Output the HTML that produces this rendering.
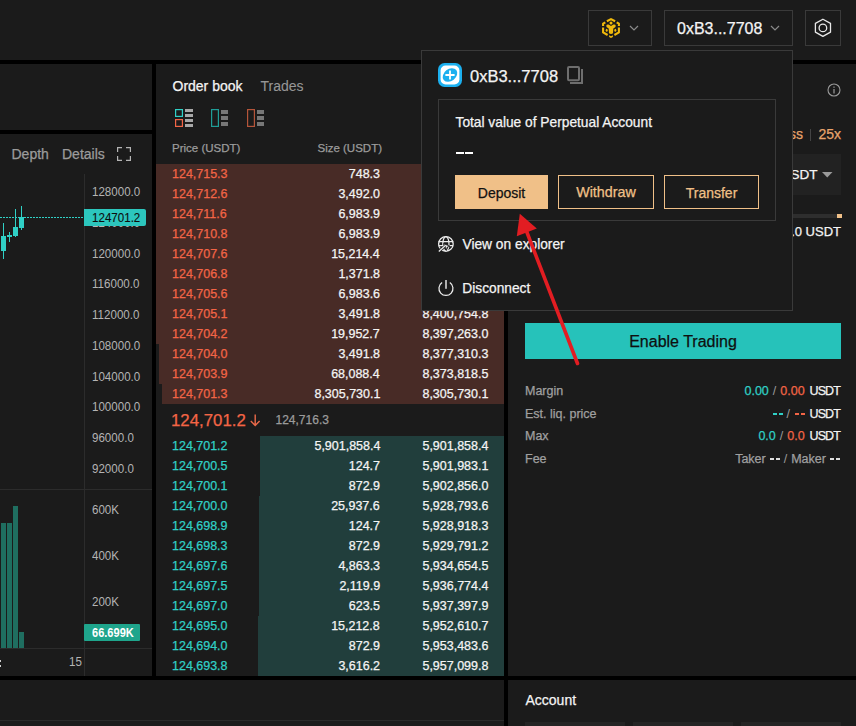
<!DOCTYPE html>
<html><head><meta charset="utf-8"><style>
html,body{margin:0;padding:0;}
body{width:856px;height:726px;position:relative;overflow:hidden;background:#000;font-family:"Liberation Sans", sans-serif;}
</style></head><body>
<div style="position:absolute;left:0px;top:0px;width:856px;height:60px;background:#1b1b1b"></div>
<div style="position:absolute;left:0px;top:64px;width:152px;height:66px;background:#1b1b1b"></div>
<div style="position:absolute;left:0px;top:134px;width:152px;height:542px;background:#1b1b1b"></div>
<div style="position:absolute;left:156px;top:64px;width:348px;height:612px;background:#1b1b1b"></div>
<div style="position:absolute;left:508px;top:64px;width:348px;height:612px;background:#1b1b1b"></div>
<div style="position:absolute;left:0px;top:680px;width:504px;height:46px;background:#1b1b1b"></div>
<div style="position:absolute;left:508px;top:680px;width:348px;height:46px;background:#1b1b1b"></div>
<div style="position:absolute;left:588px;top:10px;width:64px;height:36px;border:1px solid #3a3a3a;box-sizing:border-box"></div>
<div style="position:absolute;left:664px;top:10px;width:129px;height:36px;border:1px solid #3a3a3a;box-sizing:border-box"></div>
<div style="position:absolute;left:805px;top:10px;width:36px;height:36px;border:1px solid #3a3a3a;box-sizing:border-box"></div>
<svg style="position:absolute;left:602px;top:18px;" width="18" height="20" viewBox="0 0 18 20"><g fill="none" stroke="#f0b90b" stroke-width="2.1" stroke-linejoin="round"><path d="M4.9 3.3 L9 1.1 L13.1 3.3"/><path d="M3.3 4.3 L1.1 5.6 L1.1 7.9"/><path d="M14.7 4.3 L16.9 5.6 L16.9 7.9"/><path d="M1.1 9.6 L1.1 14.4 L5.6 17"/><path d="M16.9 9.6 L16.9 14.4 L12.4 17"/></g><g fill="#f0b90b"><path d="M7.1 17.2 L9 18.2 L10.9 17.2 L10.9 18.9 L9 20 L7.1 18.9 Z"/><circle cx="9" cy="4.9" r="1.5"/><path d="M4.2 7.9 Q4.6 5.9 6.6 6.6 L9 7.9 L11.4 6.6 Q13.4 5.9 13.8 7.9 Q13.8 9.3 11.3 10.6 L11 15.2 Q9 16.6 7 15.2 L6.7 10.6 Q4.2 9.3 4.2 7.9 Z"/><ellipse cx="4.7" cy="12.2" rx="1" ry="1.5"/><ellipse cx="13.3" cy="12.2" rx="1" ry="1.5"/></g></svg>
<svg style="position:absolute;left:629px;top:25px;" width="10" height="6" viewBox="0 0 10 6"><path d="M1 1 L5 5 L9 1" fill="none" stroke="#8a8a8a" stroke-width="1.2"/></svg>
<svg style="position:absolute;left:770px;top:25px;" width="10" height="6" viewBox="0 0 10 6"><path d="M1 1 L5 5 L9 1" fill="none" stroke="#8a8a8a" stroke-width="1.2"/></svg>
<div style="position:absolute;left:677px;top:20.76px;font-size:16px;line-height:16px;color:#f4f4f4;font-weight:400;white-space:nowrap;-webkit-text-stroke:0.25px #f4f4f4;">0xB3...7708</div>
<svg style="position:absolute;left:813px;top:18px;" width="20" height="20" viewBox="0 0 20 20"><path d="M9.9 1.2 L17.5 5.35 L17.5 14.15 L9.9 18.4 L2.4 14.15 L2.4 5.35 Z" fill="none" stroke="#e8e8e8" stroke-width="1.3" stroke-linejoin="round"/><circle cx="9.9" cy="9.9" r="3.8" fill="none" stroke="#e8e8e8" stroke-width="1.3"/></svg>
<div style="position:absolute;left:11.5px;top:147.15px;font-size:14px;line-height:14px;color:#9b9b9b;font-weight:400;white-space:nowrap;-webkit-text-stroke:0.25px #9b9b9b;">Depth</div>
<div style="position:absolute;left:62px;top:147.15px;font-size:14px;line-height:14px;color:#9b9b9b;font-weight:400;white-space:nowrap;-webkit-text-stroke:0.25px #9b9b9b;">Details</div>
<svg style="position:absolute;left:116px;top:146px;" width="16" height="16" viewBox="0 0 16 16"><path d="M1.6 6 V1.6 H6 M10 1.6 H14.4 V6 M14.4 10 V14.4 H10 M6 14.4 H1.6 V10" fill="none" stroke="#b4b4b4" stroke-width="1.2"/></svg>
<div style="position:absolute;left:84px;top:174px;width:1px;height:502px;background:#2c2c2c"></div>
<div style="position:absolute;left:0px;top:489px;width:152px;height:1px;background:#2c2c2c"></div>
<div style="position:absolute;left:0px;top:648px;width:152px;height:1px;background:#2c2c2c"></div>
<div style="position:absolute;left:92px;top:185.00px;font-size:13px;line-height:13px;color:#b4b4b4;font-weight:400;white-space:nowrap;transform:scaleX(0.89);transform-origin:left center;">128000.0</div>
<div style="position:absolute;left:92px;top:215.78px;font-size:13px;line-height:13px;color:#b4b4b4;font-weight:400;white-space:nowrap;transform:scaleX(0.89);transform-origin:left center;">124000.0</div>
<div style="position:absolute;left:92px;top:246.56px;font-size:13px;line-height:13px;color:#b4b4b4;font-weight:400;white-space:nowrap;transform:scaleX(0.89);transform-origin:left center;">120000.0</div>
<div style="position:absolute;left:92px;top:277.34px;font-size:13px;line-height:13px;color:#b4b4b4;font-weight:400;white-space:nowrap;transform:scaleX(0.89);transform-origin:left center;">116000.0</div>
<div style="position:absolute;left:92px;top:308.12px;font-size:13px;line-height:13px;color:#b4b4b4;font-weight:400;white-space:nowrap;transform:scaleX(0.89);transform-origin:left center;">112000.0</div>
<div style="position:absolute;left:92px;top:338.90px;font-size:13px;line-height:13px;color:#b4b4b4;font-weight:400;white-space:nowrap;transform:scaleX(0.89);transform-origin:left center;">108000.0</div>
<div style="position:absolute;left:92px;top:369.68px;font-size:13px;line-height:13px;color:#b4b4b4;font-weight:400;white-space:nowrap;transform:scaleX(0.89);transform-origin:left center;">104000.0</div>
<div style="position:absolute;left:92px;top:400.46px;font-size:13px;line-height:13px;color:#b4b4b4;font-weight:400;white-space:nowrap;transform:scaleX(0.89);transform-origin:left center;">100000.0</div>
<div style="position:absolute;left:92px;top:431.24px;font-size:13px;line-height:13px;color:#b4b4b4;font-weight:400;white-space:nowrap;transform:scaleX(0.89);transform-origin:left center;">96000.0</div>
<div style="position:absolute;left:92px;top:462.02px;font-size:13px;line-height:13px;color:#b4b4b4;font-weight:400;white-space:nowrap;transform:scaleX(0.89);transform-origin:left center;">92000.0</div>
<div style="position:absolute;left:92px;top:503.40px;font-size:13px;line-height:13px;color:#b4b4b4;font-weight:400;white-space:nowrap;transform:scaleX(0.89);transform-origin:left center;">600K</div>
<div style="position:absolute;left:92px;top:549.20px;font-size:13px;line-height:13px;color:#b4b4b4;font-weight:400;white-space:nowrap;transform:scaleX(0.89);transform-origin:left center;">400K</div>
<div style="position:absolute;left:92px;top:595.00px;font-size:13px;line-height:13px;color:#b4b4b4;font-weight:400;white-space:nowrap;transform:scaleX(0.89);transform-origin:left center;">200K</div>
<div style="position:absolute;left:69px;top:655.00px;font-size:13px;line-height:13px;color:#b4b4b4;font-weight:400;white-space:nowrap;transform:scaleX(0.89);transform-origin:left center;">15</div>
<div style="position:absolute;left:0px;top:660px;width:1px;height:1.5px;background:#cfcfcf"></div>
<div style="position:absolute;left:0px;top:665px;width:1px;height:1.5px;background:#cfcfcf"></div>
<div style="position:absolute;left:0px;top:217px;width:84px;height:1px;background:repeating-linear-gradient(90deg,#30d0c6 0 1.5px,transparent 1.5px 3px)"></div>
<div style="position:absolute;left:84px;top:209px;width:62px;height:17px;background:#2cc6bd;border-radius:0 2px 2px 0"></div>
<div style="position:absolute;left:92.3px;top:212.17px;font-size:12.2px;line-height:12.2px;color:#0d0d0d;font-weight:400;white-space:nowrap;transform:scaleX(0.95);transform-origin:left center;-webkit-text-stroke:0.1px #0d0d0d;">124701.2</div>
<div style="position:absolute;left:3px;top:223px;width:1.2px;height:36px;background:#30d0c6"></div>
<div style="position:absolute;left:1px;top:236px;width:5px;height:15px;background:#30d0c6"></div>
<div style="position:absolute;left:9px;top:232px;width:1.2px;height:10px;background:#30d0c6"></div>
<div style="position:absolute;left:7px;top:235px;width:5px;height:2px;background:#30d0c6"></div>
<div style="position:absolute;left:15px;top:209px;width:1.2px;height:28px;background:#30d0c6"></div>
<div style="position:absolute;left:13px;top:227px;width:5px;height:9px;background:#30d0c6"></div>
<div style="position:absolute;left:21px;top:206px;width:1.2px;height:24px;background:#30d0c6"></div>
<div style="position:absolute;left:19px;top:217px;width:5px;height:11px;background:#30d0c6"></div>
<div style="position:absolute;left:1px;top:523px;width:5px;height:125px;background:#1f6e60"></div>
<div style="position:absolute;left:7px;top:523px;width:5px;height:125px;background:#1f6e60"></div>
<div style="position:absolute;left:13px;top:506px;width:5px;height:142px;background:#1f6e60"></div>
<div style="position:absolute;left:19px;top:632px;width:5px;height:16px;background:#1f6e60"></div>
<div style="position:absolute;left:84px;top:624px;width:56px;height:17px;background:#1fa58c;border-radius:1px"></div>
<div style="position:absolute;left:91.5px;top:627.04px;font-size:12px;line-height:12px;color:#ffffff;font-weight:700;white-space:nowrap;transform:scaleX(0.92);transform-origin:left center;">66.699K</div>
<div style="position:absolute;left:172.5px;top:79.35px;font-size:14px;line-height:14px;color:#f4f4f4;font-weight:400;white-space:nowrap;-webkit-text-stroke:0.25px #f4f4f4;">Order book</div>
<div style="position:absolute;left:260.5px;top:79.35px;font-size:14px;line-height:14px;color:#969696;font-weight:400;white-space:nowrap;-webkit-text-stroke:0.1px #969696;">Trades</div>
<svg style="position:absolute;left:174px;top:108px;" width="20" height="20" viewBox="0 0 20 20"><rect x="1.6" y="1.6" width="6.8" height="6.8" fill="none" stroke="#2fd0c6" stroke-width="1.2"/><rect x="1.6" y="11.6" width="6.8" height="6.8" fill="none" stroke="#f36546" stroke-width="1.2"/><g fill="#a8a8a8"><rect x="11" y="1" width="8" height="3"/><rect x="11" y="6" width="8" height="3"/><rect x="11" y="11" width="8" height="3"/><rect x="11" y="16" width="8" height="3"/></g></svg>
<svg style="position:absolute;left:210px;top:108px;" width="20" height="20" viewBox="0 0 20 20"><rect x="1.6" y="1.6" width="6.8" height="16.8" fill="none" stroke="#1f9e98" stroke-width="1.2"/><g fill="#777"><rect x="11" y="2" width="7" height="4"/><rect x="11" y="8" width="7" height="4"/><rect x="11" y="14" width="7" height="4"/></g></svg>
<svg style="position:absolute;left:246px;top:108px;" width="20" height="20" viewBox="0 0 20 20"><rect x="1.6" y="1.6" width="6.8" height="16.8" fill="none" stroke="#b5553a" stroke-width="1.2"/><g fill="#777"><rect x="11" y="2" width="7" height="4"/><rect x="11" y="8" width="7" height="4"/><rect x="11" y="14" width="7" height="4"/></g></svg>
<div style="position:absolute;left:172px;top:142.77px;font-size:11.5px;line-height:11.5px;color:#9b9b9b;font-weight:400;white-space:nowrap;-webkit-text-stroke:0.25px #9b9b9b;">Price (USDT)</div>
<div style="position:absolute;right:474px;text-align:right;top:142.77px;font-size:11.5px;line-height:11.5px;color:#9b9b9b;font-weight:400;white-space:nowrap;-webkit-text-stroke:0.25px #9b9b9b;">Size (USDT)</div>
<div style="position:absolute;left:156px;top:164px;width:348px;height:20px;background:#482b26"></div>
<div style="position:absolute;left:156px;top:184px;width:348px;height:20px;background:#482b26"></div>
<div style="position:absolute;left:156px;top:204px;width:348px;height:20px;background:#482b26"></div>
<div style="position:absolute;left:156px;top:224px;width:348px;height:20px;background:#482b26"></div>
<div style="position:absolute;left:156px;top:244px;width:348px;height:20px;background:#482b26"></div>
<div style="position:absolute;left:156px;top:264px;width:348px;height:20px;background:#482b26"></div>
<div style="position:absolute;left:156px;top:284px;width:348px;height:20px;background:#482b26"></div>
<div style="position:absolute;left:156px;top:304px;width:348px;height:20px;background:#482b26"></div>
<div style="position:absolute;left:156px;top:324px;width:348px;height:20px;background:#482b26"></div>
<div style="position:absolute;left:159px;top:344px;width:345px;height:20px;background:#482b26"></div>
<div style="position:absolute;left:159px;top:364px;width:345px;height:20px;background:#482b26"></div>
<div style="position:absolute;left:162px;top:384px;width:342px;height:20px;background:#482b26"></div>
<div style="position:absolute;left:172.3px;top:168.04px;font-size:12px;line-height:12px;color:#f36546;font-weight:400;white-space:nowrap;transform:scaleX(1.04);transform-origin:left center;-webkit-text-stroke:0.25px #f36546;">124,715.3</div>
<div style="position:absolute;right:475.8px;text-align:right;top:168.04px;font-size:12px;line-height:12px;color:#f4f4f4;font-weight:400;white-space:nowrap;transform:scaleX(1.04);transform-origin:right center;-webkit-text-stroke:0.25px #f4f4f4;">748.3</div>
<div style="position:absolute;right:367.8px;text-align:right;top:168.04px;font-size:12px;line-height:12px;color:#f4f4f4;font-weight:400;white-space:nowrap;transform:scaleX(1.04);transform-origin:right center;-webkit-text-stroke:0.25px #f4f4f4;">8,456,321.5</div>
<div style="position:absolute;left:172.3px;top:188.04px;font-size:12px;line-height:12px;color:#f36546;font-weight:400;white-space:nowrap;transform:scaleX(1.04);transform-origin:left center;-webkit-text-stroke:0.25px #f36546;">124,712.6</div>
<div style="position:absolute;right:475.8px;text-align:right;top:188.04px;font-size:12px;line-height:12px;color:#f4f4f4;font-weight:400;white-space:nowrap;transform:scaleX(1.04);transform-origin:right center;-webkit-text-stroke:0.25px #f4f4f4;">3,492.0</div>
<div style="position:absolute;right:367.8px;text-align:right;top:188.04px;font-size:12px;line-height:12px;color:#f4f4f4;font-weight:400;white-space:nowrap;transform:scaleX(1.04);transform-origin:right center;-webkit-text-stroke:0.25px #f4f4f4;">8,455,573.2</div>
<div style="position:absolute;left:172.3px;top:208.04px;font-size:12px;line-height:12px;color:#f36546;font-weight:400;white-space:nowrap;transform:scaleX(1.04);transform-origin:left center;-webkit-text-stroke:0.25px #f36546;">124,711.6</div>
<div style="position:absolute;right:475.8px;text-align:right;top:208.04px;font-size:12px;line-height:12px;color:#f4f4f4;font-weight:400;white-space:nowrap;transform:scaleX(1.04);transform-origin:right center;-webkit-text-stroke:0.25px #f4f4f4;">6,983.9</div>
<div style="position:absolute;right:367.8px;text-align:right;top:208.04px;font-size:12px;line-height:12px;color:#f4f4f4;font-weight:400;white-space:nowrap;transform:scaleX(1.04);transform-origin:right center;-webkit-text-stroke:0.25px #f4f4f4;">8,452,081.2</div>
<div style="position:absolute;left:172.3px;top:228.04px;font-size:12px;line-height:12px;color:#f36546;font-weight:400;white-space:nowrap;transform:scaleX(1.04);transform-origin:left center;-webkit-text-stroke:0.25px #f36546;">124,710.8</div>
<div style="position:absolute;right:475.8px;text-align:right;top:228.04px;font-size:12px;line-height:12px;color:#f4f4f4;font-weight:400;white-space:nowrap;transform:scaleX(1.04);transform-origin:right center;-webkit-text-stroke:0.25px #f4f4f4;">6,983.9</div>
<div style="position:absolute;right:367.8px;text-align:right;top:228.04px;font-size:12px;line-height:12px;color:#f4f4f4;font-weight:400;white-space:nowrap;transform:scaleX(1.04);transform-origin:right center;-webkit-text-stroke:0.25px #f4f4f4;">8,445,097.3</div>
<div style="position:absolute;left:172.3px;top:248.04px;font-size:12px;line-height:12px;color:#f36546;font-weight:400;white-space:nowrap;transform:scaleX(1.04);transform-origin:left center;-webkit-text-stroke:0.25px #f36546;">124,707.6</div>
<div style="position:absolute;right:475.8px;text-align:right;top:248.04px;font-size:12px;line-height:12px;color:#f4f4f4;font-weight:400;white-space:nowrap;transform:scaleX(1.04);transform-origin:right center;-webkit-text-stroke:0.25px #f4f4f4;">15,214.4</div>
<div style="position:absolute;right:367.8px;text-align:right;top:248.04px;font-size:12px;line-height:12px;color:#f4f4f4;font-weight:400;white-space:nowrap;transform:scaleX(1.04);transform-origin:right center;-webkit-text-stroke:0.25px #f4f4f4;">8,438,113.4</div>
<div style="position:absolute;left:172.3px;top:268.04px;font-size:12px;line-height:12px;color:#f36546;font-weight:400;white-space:nowrap;transform:scaleX(1.04);transform-origin:left center;-webkit-text-stroke:0.25px #f36546;">124,706.8</div>
<div style="position:absolute;right:475.8px;text-align:right;top:268.04px;font-size:12px;line-height:12px;color:#f4f4f4;font-weight:400;white-space:nowrap;transform:scaleX(1.04);transform-origin:right center;-webkit-text-stroke:0.25px #f4f4f4;">1,371.8</div>
<div style="position:absolute;right:367.8px;text-align:right;top:268.04px;font-size:12px;line-height:12px;color:#f4f4f4;font-weight:400;white-space:nowrap;transform:scaleX(1.04);transform-origin:right center;-webkit-text-stroke:0.25px #f4f4f4;">8,422,899.0</div>
<div style="position:absolute;left:172.3px;top:288.04px;font-size:12px;line-height:12px;color:#f36546;font-weight:400;white-space:nowrap;transform:scaleX(1.04);transform-origin:left center;-webkit-text-stroke:0.25px #f36546;">124,705.6</div>
<div style="position:absolute;right:475.8px;text-align:right;top:288.04px;font-size:12px;line-height:12px;color:#f4f4f4;font-weight:400;white-space:nowrap;transform:scaleX(1.04);transform-origin:right center;-webkit-text-stroke:0.25px #f4f4f4;">6,983.6</div>
<div style="position:absolute;right:367.8px;text-align:right;top:288.04px;font-size:12px;line-height:12px;color:#f4f4f4;font-weight:400;white-space:nowrap;transform:scaleX(1.04);transform-origin:right center;-webkit-text-stroke:0.25px #f4f4f4;">8,407,738.4</div>
<div style="position:absolute;left:172.3px;top:308.04px;font-size:12px;line-height:12px;color:#f36546;font-weight:400;white-space:nowrap;transform:scaleX(1.04);transform-origin:left center;-webkit-text-stroke:0.25px #f36546;">124,705.1</div>
<div style="position:absolute;right:475.8px;text-align:right;top:308.04px;font-size:12px;line-height:12px;color:#f4f4f4;font-weight:400;white-space:nowrap;transform:scaleX(1.04);transform-origin:right center;-webkit-text-stroke:0.25px #f4f4f4;">3,491.8</div>
<div style="position:absolute;right:367.8px;text-align:right;top:308.04px;font-size:12px;line-height:12px;color:#f4f4f4;font-weight:400;white-space:nowrap;transform:scaleX(1.04);transform-origin:right center;-webkit-text-stroke:0.25px #f4f4f4;">8,400,754.8</div>
<div style="position:absolute;left:172.3px;top:328.04px;font-size:12px;line-height:12px;color:#f36546;font-weight:400;white-space:nowrap;transform:scaleX(1.04);transform-origin:left center;-webkit-text-stroke:0.25px #f36546;">124,704.2</div>
<div style="position:absolute;right:475.8px;text-align:right;top:328.04px;font-size:12px;line-height:12px;color:#f4f4f4;font-weight:400;white-space:nowrap;transform:scaleX(1.04);transform-origin:right center;-webkit-text-stroke:0.25px #f4f4f4;">19,952.7</div>
<div style="position:absolute;right:367.8px;text-align:right;top:328.04px;font-size:12px;line-height:12px;color:#f4f4f4;font-weight:400;white-space:nowrap;transform:scaleX(1.04);transform-origin:right center;-webkit-text-stroke:0.25px #f4f4f4;">8,397,263.0</div>
<div style="position:absolute;left:172.3px;top:348.04px;font-size:12px;line-height:12px;color:#f36546;font-weight:400;white-space:nowrap;transform:scaleX(1.04);transform-origin:left center;-webkit-text-stroke:0.25px #f36546;">124,704.0</div>
<div style="position:absolute;right:475.8px;text-align:right;top:348.04px;font-size:12px;line-height:12px;color:#f4f4f4;font-weight:400;white-space:nowrap;transform:scaleX(1.04);transform-origin:right center;-webkit-text-stroke:0.25px #f4f4f4;">3,491.8</div>
<div style="position:absolute;right:367.8px;text-align:right;top:348.04px;font-size:12px;line-height:12px;color:#f4f4f4;font-weight:400;white-space:nowrap;transform:scaleX(1.04);transform-origin:right center;-webkit-text-stroke:0.25px #f4f4f4;">8,377,310.3</div>
<div style="position:absolute;left:172.3px;top:368.04px;font-size:12px;line-height:12px;color:#f36546;font-weight:400;white-space:nowrap;transform:scaleX(1.04);transform-origin:left center;-webkit-text-stroke:0.25px #f36546;">124,703.9</div>
<div style="position:absolute;right:475.8px;text-align:right;top:368.04px;font-size:12px;line-height:12px;color:#f4f4f4;font-weight:400;white-space:nowrap;transform:scaleX(1.04);transform-origin:right center;-webkit-text-stroke:0.25px #f4f4f4;">68,088.4</div>
<div style="position:absolute;right:367.8px;text-align:right;top:368.04px;font-size:12px;line-height:12px;color:#f4f4f4;font-weight:400;white-space:nowrap;transform:scaleX(1.04);transform-origin:right center;-webkit-text-stroke:0.25px #f4f4f4;">8,373,818.5</div>
<div style="position:absolute;left:172.3px;top:388.04px;font-size:12px;line-height:12px;color:#f36546;font-weight:400;white-space:nowrap;transform:scaleX(1.04);transform-origin:left center;-webkit-text-stroke:0.25px #f36546;">124,701.3</div>
<div style="position:absolute;right:475.8px;text-align:right;top:388.04px;font-size:12px;line-height:12px;color:#f4f4f4;font-weight:400;white-space:nowrap;transform:scaleX(1.04);transform-origin:right center;-webkit-text-stroke:0.25px #f4f4f4;">8,305,730.1</div>
<div style="position:absolute;right:367.8px;text-align:right;top:388.04px;font-size:12px;line-height:12px;color:#f4f4f4;font-weight:400;white-space:nowrap;transform:scaleX(1.04);transform-origin:right center;-webkit-text-stroke:0.25px #f4f4f4;">8,305,730.1</div>
<div style="position:absolute;left:171px;top:412.76px;font-size:16px;line-height:16px;color:#f36546;font-weight:400;white-space:nowrap;transform:scaleX(1.05);transform-origin:left center;-webkit-text-stroke:0.25px #f36546;">124,701.2</div>
<svg style="position:absolute;left:249px;top:413px;" width="12" height="14" viewBox="0 0 12 14"><path d="M6.2 1.5 V12.3 M1.8 8 L6.2 12.4 L10.6 8" fill="none" stroke="#ea6a4a" stroke-width="1.4"/></svg>
<div style="position:absolute;left:275.5px;top:413.84px;font-size:12px;line-height:12px;color:#9b9b9b;font-weight:400;white-space:nowrap;-webkit-text-stroke:0.25px #9b9b9b;">124,716.3</div>
<div style="position:absolute;left:260px;top:436px;width:244px;height:20px;background:#213e3c"></div>
<div style="position:absolute;left:260px;top:456px;width:244px;height:20px;background:#213e3c"></div>
<div style="position:absolute;left:260px;top:476px;width:244px;height:20px;background:#213e3c"></div>
<div style="position:absolute;left:259px;top:496px;width:245px;height:20px;background:#213e3c"></div>
<div style="position:absolute;left:259px;top:516px;width:245px;height:20px;background:#213e3c"></div>
<div style="position:absolute;left:259px;top:536px;width:245px;height:20px;background:#213e3c"></div>
<div style="position:absolute;left:259px;top:556px;width:245px;height:20px;background:#213e3c"></div>
<div style="position:absolute;left:259px;top:576px;width:245px;height:20px;background:#213e3c"></div>
<div style="position:absolute;left:259px;top:596px;width:245px;height:20px;background:#213e3c"></div>
<div style="position:absolute;left:258px;top:616px;width:246px;height:20px;background:#213e3c"></div>
<div style="position:absolute;left:258px;top:636px;width:246px;height:20px;background:#213e3c"></div>
<div style="position:absolute;left:258px;top:656px;width:246px;height:20px;background:#213e3c"></div>
<div style="position:absolute;left:172.3px;top:440.04px;font-size:12px;line-height:12px;color:#30d0c6;font-weight:400;white-space:nowrap;transform:scaleX(1.04);transform-origin:left center;-webkit-text-stroke:0.25px #30d0c6;">124,701.2</div>
<div style="position:absolute;right:475.8px;text-align:right;top:440.04px;font-size:12px;line-height:12px;color:#f4f4f4;font-weight:400;white-space:nowrap;transform:scaleX(1.04);transform-origin:right center;-webkit-text-stroke:0.25px #f4f4f4;">5,901,858.4</div>
<div style="position:absolute;right:367.8px;text-align:right;top:440.04px;font-size:12px;line-height:12px;color:#f4f4f4;font-weight:400;white-space:nowrap;transform:scaleX(1.04);transform-origin:right center;-webkit-text-stroke:0.25px #f4f4f4;">5,901,858.4</div>
<div style="position:absolute;left:172.3px;top:460.04px;font-size:12px;line-height:12px;color:#30d0c6;font-weight:400;white-space:nowrap;transform:scaleX(1.04);transform-origin:left center;-webkit-text-stroke:0.25px #30d0c6;">124,700.5</div>
<div style="position:absolute;right:475.8px;text-align:right;top:460.04px;font-size:12px;line-height:12px;color:#f4f4f4;font-weight:400;white-space:nowrap;transform:scaleX(1.04);transform-origin:right center;-webkit-text-stroke:0.25px #f4f4f4;">124.7</div>
<div style="position:absolute;right:367.8px;text-align:right;top:460.04px;font-size:12px;line-height:12px;color:#f4f4f4;font-weight:400;white-space:nowrap;transform:scaleX(1.04);transform-origin:right center;-webkit-text-stroke:0.25px #f4f4f4;">5,901,983.1</div>
<div style="position:absolute;left:172.3px;top:480.04px;font-size:12px;line-height:12px;color:#30d0c6;font-weight:400;white-space:nowrap;transform:scaleX(1.04);transform-origin:left center;-webkit-text-stroke:0.25px #30d0c6;">124,700.1</div>
<div style="position:absolute;right:475.8px;text-align:right;top:480.04px;font-size:12px;line-height:12px;color:#f4f4f4;font-weight:400;white-space:nowrap;transform:scaleX(1.04);transform-origin:right center;-webkit-text-stroke:0.25px #f4f4f4;">872.9</div>
<div style="position:absolute;right:367.8px;text-align:right;top:480.04px;font-size:12px;line-height:12px;color:#f4f4f4;font-weight:400;white-space:nowrap;transform:scaleX(1.04);transform-origin:right center;-webkit-text-stroke:0.25px #f4f4f4;">5,902,856.0</div>
<div style="position:absolute;left:172.3px;top:500.04px;font-size:12px;line-height:12px;color:#30d0c6;font-weight:400;white-space:nowrap;transform:scaleX(1.04);transform-origin:left center;-webkit-text-stroke:0.25px #30d0c6;">124,700.0</div>
<div style="position:absolute;right:475.8px;text-align:right;top:500.04px;font-size:12px;line-height:12px;color:#f4f4f4;font-weight:400;white-space:nowrap;transform:scaleX(1.04);transform-origin:right center;-webkit-text-stroke:0.25px #f4f4f4;">25,937.6</div>
<div style="position:absolute;right:367.8px;text-align:right;top:500.04px;font-size:12px;line-height:12px;color:#f4f4f4;font-weight:400;white-space:nowrap;transform:scaleX(1.04);transform-origin:right center;-webkit-text-stroke:0.25px #f4f4f4;">5,928,793.6</div>
<div style="position:absolute;left:172.3px;top:520.04px;font-size:12px;line-height:12px;color:#30d0c6;font-weight:400;white-space:nowrap;transform:scaleX(1.04);transform-origin:left center;-webkit-text-stroke:0.25px #30d0c6;">124,698.9</div>
<div style="position:absolute;right:475.8px;text-align:right;top:520.04px;font-size:12px;line-height:12px;color:#f4f4f4;font-weight:400;white-space:nowrap;transform:scaleX(1.04);transform-origin:right center;-webkit-text-stroke:0.25px #f4f4f4;">124.7</div>
<div style="position:absolute;right:367.8px;text-align:right;top:520.04px;font-size:12px;line-height:12px;color:#f4f4f4;font-weight:400;white-space:nowrap;transform:scaleX(1.04);transform-origin:right center;-webkit-text-stroke:0.25px #f4f4f4;">5,928,918.3</div>
<div style="position:absolute;left:172.3px;top:540.04px;font-size:12px;line-height:12px;color:#30d0c6;font-weight:400;white-space:nowrap;transform:scaleX(1.04);transform-origin:left center;-webkit-text-stroke:0.25px #30d0c6;">124,698.3</div>
<div style="position:absolute;right:475.8px;text-align:right;top:540.04px;font-size:12px;line-height:12px;color:#f4f4f4;font-weight:400;white-space:nowrap;transform:scaleX(1.04);transform-origin:right center;-webkit-text-stroke:0.25px #f4f4f4;">872.9</div>
<div style="position:absolute;right:367.8px;text-align:right;top:540.04px;font-size:12px;line-height:12px;color:#f4f4f4;font-weight:400;white-space:nowrap;transform:scaleX(1.04);transform-origin:right center;-webkit-text-stroke:0.25px #f4f4f4;">5,929,791.2</div>
<div style="position:absolute;left:172.3px;top:560.04px;font-size:12px;line-height:12px;color:#30d0c6;font-weight:400;white-space:nowrap;transform:scaleX(1.04);transform-origin:left center;-webkit-text-stroke:0.25px #30d0c6;">124,697.6</div>
<div style="position:absolute;right:475.8px;text-align:right;top:560.04px;font-size:12px;line-height:12px;color:#f4f4f4;font-weight:400;white-space:nowrap;transform:scaleX(1.04);transform-origin:right center;-webkit-text-stroke:0.25px #f4f4f4;">4,863.3</div>
<div style="position:absolute;right:367.8px;text-align:right;top:560.04px;font-size:12px;line-height:12px;color:#f4f4f4;font-weight:400;white-space:nowrap;transform:scaleX(1.04);transform-origin:right center;-webkit-text-stroke:0.25px #f4f4f4;">5,934,654.5</div>
<div style="position:absolute;left:172.3px;top:580.04px;font-size:12px;line-height:12px;color:#30d0c6;font-weight:400;white-space:nowrap;transform:scaleX(1.04);transform-origin:left center;-webkit-text-stroke:0.25px #30d0c6;">124,697.5</div>
<div style="position:absolute;right:475.8px;text-align:right;top:580.04px;font-size:12px;line-height:12px;color:#f4f4f4;font-weight:400;white-space:nowrap;transform:scaleX(1.04);transform-origin:right center;-webkit-text-stroke:0.25px #f4f4f4;">2,119.9</div>
<div style="position:absolute;right:367.8px;text-align:right;top:580.04px;font-size:12px;line-height:12px;color:#f4f4f4;font-weight:400;white-space:nowrap;transform:scaleX(1.04);transform-origin:right center;-webkit-text-stroke:0.25px #f4f4f4;">5,936,774.4</div>
<div style="position:absolute;left:172.3px;top:600.04px;font-size:12px;line-height:12px;color:#30d0c6;font-weight:400;white-space:nowrap;transform:scaleX(1.04);transform-origin:left center;-webkit-text-stroke:0.25px #30d0c6;">124,697.0</div>
<div style="position:absolute;right:475.8px;text-align:right;top:600.04px;font-size:12px;line-height:12px;color:#f4f4f4;font-weight:400;white-space:nowrap;transform:scaleX(1.04);transform-origin:right center;-webkit-text-stroke:0.25px #f4f4f4;">623.5</div>
<div style="position:absolute;right:367.8px;text-align:right;top:600.04px;font-size:12px;line-height:12px;color:#f4f4f4;font-weight:400;white-space:nowrap;transform:scaleX(1.04);transform-origin:right center;-webkit-text-stroke:0.25px #f4f4f4;">5,937,397.9</div>
<div style="position:absolute;left:172.3px;top:620.04px;font-size:12px;line-height:12px;color:#30d0c6;font-weight:400;white-space:nowrap;transform:scaleX(1.04);transform-origin:left center;-webkit-text-stroke:0.25px #30d0c6;">124,695.0</div>
<div style="position:absolute;right:475.8px;text-align:right;top:620.04px;font-size:12px;line-height:12px;color:#f4f4f4;font-weight:400;white-space:nowrap;transform:scaleX(1.04);transform-origin:right center;-webkit-text-stroke:0.25px #f4f4f4;">15,212.8</div>
<div style="position:absolute;right:367.8px;text-align:right;top:620.04px;font-size:12px;line-height:12px;color:#f4f4f4;font-weight:400;white-space:nowrap;transform:scaleX(1.04);transform-origin:right center;-webkit-text-stroke:0.25px #f4f4f4;">5,952,610.7</div>
<div style="position:absolute;left:172.3px;top:640.04px;font-size:12px;line-height:12px;color:#30d0c6;font-weight:400;white-space:nowrap;transform:scaleX(1.04);transform-origin:left center;-webkit-text-stroke:0.25px #30d0c6;">124,694.0</div>
<div style="position:absolute;right:475.8px;text-align:right;top:640.04px;font-size:12px;line-height:12px;color:#f4f4f4;font-weight:400;white-space:nowrap;transform:scaleX(1.04);transform-origin:right center;-webkit-text-stroke:0.25px #f4f4f4;">872.9</div>
<div style="position:absolute;right:367.8px;text-align:right;top:640.04px;font-size:12px;line-height:12px;color:#f4f4f4;font-weight:400;white-space:nowrap;transform:scaleX(1.04);transform-origin:right center;-webkit-text-stroke:0.25px #f4f4f4;">5,953,483.6</div>
<div style="position:absolute;left:172.3px;top:660.04px;font-size:12px;line-height:12px;color:#30d0c6;font-weight:400;white-space:nowrap;transform:scaleX(1.04);transform-origin:left center;-webkit-text-stroke:0.25px #30d0c6;">124,693.8</div>
<div style="position:absolute;right:475.8px;text-align:right;top:660.04px;font-size:12px;line-height:12px;color:#f4f4f4;font-weight:400;white-space:nowrap;transform:scaleX(1.04);transform-origin:right center;-webkit-text-stroke:0.25px #f4f4f4;">3,616.2</div>
<div style="position:absolute;right:367.8px;text-align:right;top:660.04px;font-size:12px;line-height:12px;color:#f4f4f4;font-weight:400;white-space:nowrap;transform:scaleX(1.04);transform-origin:right center;-webkit-text-stroke:0.25px #f4f4f4;">5,957,099.8</div>
<svg style="position:absolute;left:827px;top:83px;" width="14" height="14" viewBox="0 0 14 14"><circle cx="7" cy="7" r="6" fill="none" stroke="#9a9a9a" stroke-width="1.1"/><rect x="6.4" y="6" width="1.2" height="4.5" fill="#9a9a9a"/><rect x="6.4" y="3.5" width="1.2" height="1.3" fill="#9a9a9a"/></svg>
<div style="position:absolute;right:53px;text-align:right;top:126.65px;font-size:14px;line-height:14px;color:#e8a46c;font-weight:400;white-space:nowrap;-webkit-text-stroke:0.25px #e8a46c;">Cross</div>
<div style="position:absolute;left:810px;top:129px;width:1px;height:12px;background:#444"></div>
<div style="position:absolute;right:15px;text-align:right;top:126.65px;font-size:14px;line-height:14px;color:#e8a46c;font-weight:400;white-space:nowrap;-webkit-text-stroke:0.25px #e8a46c;">25x</div>
<div style="position:absolute;left:525px;top:154px;width:316px;height:41px;background:#222222"></div>
<div style="position:absolute;right:38.5px;text-align:right;top:168.07px;font-size:13.5px;line-height:13.5px;color:#f4f4f4;font-weight:400;white-space:nowrap;-webkit-text-stroke:0.25px #f4f4f4;">USDT</div>
<svg style="position:absolute;left:822px;top:172px;" width="11" height="6" viewBox="0 0 11 6"><path d="M0 0 H10.5 L5.25 5.5 Z" fill="#9a9a9a"/></svg>
<div style="position:absolute;left:525px;top:214px;width:316px;height:4px;background:#2e2e2e"></div>
<div style="position:absolute;left:837px;top:213.5px;width:4.5px;height:4.5px;background:#f0c088"></div>
<div style="position:absolute;right:15px;text-align:right;top:224.60px;font-size:13px;line-height:13px;color:#f4f4f4;font-weight:400;white-space:nowrap;-webkit-text-stroke:0.25px #f4f4f4;">0.0 USDT</div>
<div style="position:absolute;left:525px;top:323px;width:316px;height:36px;background:#26c2ba"></div>
<div style="position:absolute;left:383px;width:600px;text-align:center;top:334.46px;font-size:16px;line-height:16px;color:#0f0f0f;font-weight:400;white-space:nowrap;-webkit-text-stroke:0.25px #0f0f0f;">Enable Trading</div>
<div style="position:absolute;left:525px;top:384.62px;font-size:12.5px;line-height:12.5px;color:#a0a0a0;font-weight:400;white-space:nowrap;-webkit-text-stroke:0.25px #a0a0a0;">Margin</div>
<div style="position:absolute;left:525px;top:407.72px;font-size:12.5px;line-height:12.5px;color:#a0a0a0;font-weight:400;white-space:nowrap;-webkit-text-stroke:0.25px #a0a0a0;">Est. liq. price</div>
<div style="position:absolute;left:525px;top:430.42px;font-size:12.5px;line-height:12.5px;color:#a0a0a0;font-weight:400;white-space:nowrap;-webkit-text-stroke:0.25px #a0a0a0;">Max</div>
<div style="position:absolute;left:525px;top:453.22px;font-size:12.5px;line-height:12.5px;color:#a0a0a0;font-weight:400;white-space:nowrap;-webkit-text-stroke:0.25px #a0a0a0;">Fee</div>
<div style="position:absolute;right:16px;text-align:right;top:384.62px;font-size:12.5px;line-height:12.5px;color:#f4f4f4;font-weight:400;white-space:nowrap;"><span style="color:#30d0c6;-webkit-text-stroke:0.25px #30d0c6">0.00</span><span style="color:#9b9b9b;margin:0 0.5px"> / </span><span style="color:#f36546;-webkit-text-stroke:0.25px #f36546">0.00</span><span style="color:#f4f4f4;-webkit-text-stroke:0.25px #f4f4f4;letter-spacing:-0.9px;margin-left:2.4px"> USDT</span></div>
<div style="position:absolute;right:16px;text-align:right;top:407.72px;font-size:12.5px;line-height:12.5px;color:#f4f4f4;font-weight:400;white-space:nowrap;"><span style="display:inline-block;width:10px;height:2px;background:linear-gradient(90deg,#30d0c6 0 4.4px,transparent 4.4px 5.6px,#30d0c6 5.6px 10px);margin-left:0.6px;vertical-align:3px"></span><span style="color:#9b9b9b;margin:0 0.5px"> / </span><span style="display:inline-block;width:10px;height:2px;background:linear-gradient(90deg,#f36546 0 4.4px,transparent 4.4px 5.6px,#f36546 5.6px 10px);margin-left:0.6px;vertical-align:3px"></span><span style="color:#f4f4f4;-webkit-text-stroke:0.25px #f4f4f4;letter-spacing:-0.9px;margin-left:2.4px"> USDT</span></div>
<div style="position:absolute;right:16px;text-align:right;top:430.42px;font-size:12.5px;line-height:12.5px;color:#f4f4f4;font-weight:400;white-space:nowrap;"><span style="color:#30d0c6;-webkit-text-stroke:0.25px #30d0c6">0.0</span><span style="color:#9b9b9b;margin:0 0.5px"> / </span><span style="color:#f36546;-webkit-text-stroke:0.25px #f36546">0.0</span><span style="color:#f4f4f4;-webkit-text-stroke:0.25px #f4f4f4;letter-spacing:-0.9px;margin-left:2.4px"> USDT</span></div>
<div style="position:absolute;right:16px;text-align:right;top:453.22px;font-size:12.5px;line-height:12.5px;color:#f4f4f4;font-weight:400;white-space:nowrap;"><span style="color:#a0a0a0;-webkit-text-stroke:0.25px #a0a0a0">Taker </span><span style="display:inline-block;width:10px;height:2px;background:linear-gradient(90deg,#dddddd 0 4.4px,transparent 4.4px 5.6px,#dddddd 5.6px 10px);margin-left:0.6px;vertical-align:3px"></span><span style="color:#9b9b9b;margin:0 0.5px"> / </span><span style="color:#a0a0a0;-webkit-text-stroke:0.25px #a0a0a0">Maker </span><span style="display:inline-block;width:10px;height:2px;background:linear-gradient(90deg,#dddddd 0 4.4px,transparent 4.4px 5.6px,#dddddd 5.6px 10px);margin-left:0.6px;vertical-align:3px"></span></div>
<div style="position:absolute;left:0px;top:720px;width:504px;height:1px;background:#2a2a2a"></div>
<div style="position:absolute;left:525.5px;top:693.35px;font-size:14px;line-height:14px;color:#f4f4f4;font-weight:400;white-space:nowrap;-webkit-text-stroke:0.25px #f4f4f4;">Account</div>
<div style="position:absolute;left:525px;top:722px;width:100px;height:4px;background:#242424"></div>
<div style="position:absolute;left:633px;top:722px;width:100px;height:4px;background:#242424"></div>
<div style="position:absolute;left:741px;top:722px;width:100px;height:4px;background:#242424"></div>
<div style="position:absolute;left:421px;top:50px;width:372px;height:261px;background:#1b1b1b;border:1px solid #3a3a3a;box-sizing:border-box"></div>
<svg style="position:absolute;left:438px;top:63px;" width="24" height="24" viewBox="0 0 24 24"><rect x="0" y="0" width="24" height="24" rx="6.5" fill="#1cb0ef"/><rect x="2.6" y="2.6" width="18.8" height="18.8" rx="5" fill="#ffffff"/><ellipse cx="12" cy="12" rx="8" ry="6" transform="rotate(-38 12 12)" fill="#1cb0ef"/><path d="M12 7.4 V16.6 M7.4 12 H16.6" stroke="#ffffff" stroke-width="1.8"/></svg>
<div style="position:absolute;left:470px;top:67.53px;font-size:16.5px;line-height:16.5px;color:#f4f4f4;font-weight:400;white-space:nowrap;-webkit-text-stroke:0.25px #f4f4f4;">0xB3...7708</div>
<svg style="position:absolute;left:564px;top:64px;" width="22" height="22" viewBox="0 0 22 22"><g fill="none" stroke="#6e6e6e" stroke-width="2"><rect x="4" y="3" width="11" height="13.2" rx="1"/><path d="M18 5 V19 H6"/></g></svg>
<div style="position:absolute;left:438px;top:99px;width:338px;height:122px;border:1px solid #3a3a3a;box-sizing:border-box"></div>
<div style="position:absolute;left:455.5px;top:115.66px;font-size:13.75px;line-height:13.75px;color:#f4f4f4;font-weight:400;white-space:nowrap;-webkit-text-stroke:0.25px #f4f4f4;">Total value of Perpetual Account</div>
<div style="position:absolute;left:456px;top:152px;width:8px;height:2px;background:#ffffff"></div>
<div style="position:absolute;left:465px;top:152px;width:8px;height:2px;background:#ffffff"></div>
<div style="position:absolute;left:455px;top:175px;width:93px;height:34px;background:#f0c088"></div>
<div style="position:absolute;left:201.5px;width:600px;text-align:center;top:185.65px;font-size:14px;line-height:14px;color:#111111;font-weight:400;white-space:nowrap;-webkit-text-stroke:0.25px #111111;">Deposit</div>
<div style="position:absolute;left:558px;top:175px;width:96px;height:34px;border:1px solid #f0c088;box-sizing:border-box"></div>
<div style="position:absolute;left:306px;width:600px;text-align:center;top:185.40px;font-size:14.3px;line-height:14.3px;color:#f0c088;font-weight:400;white-space:nowrap;-webkit-text-stroke:0.25px #f0c088;">Withdraw</div>
<div style="position:absolute;left:664px;top:175px;width:95px;height:34px;border:1px solid #f0c088;box-sizing:border-box"></div>
<div style="position:absolute;left:411.5px;width:600px;text-align:center;top:185.65px;font-size:14px;line-height:14px;color:#f0c088;font-weight:400;white-space:nowrap;-webkit-text-stroke:0.25px #f0c088;">Transfer</div>
<svg style="position:absolute;left:436px;top:234px;" width="20" height="20" viewBox="0 0 20 20"><g fill="none" stroke="#ececec" stroke-width="1.25"><circle cx="9.9" cy="9.9" r="7.3"/><ellipse cx="9.9" cy="9.9" rx="3.1" ry="7.3"/><path d="M2.6 7.6 H17.2 M2.6 11.7 H17.2"/></g><path d="M7.6 9.6 L14 12.2 L11.2 13.2 L10.4 16.4 Z" fill="#ececec" stroke="#1b1b1b" stroke-width="0.9"/><path d="M3 17.3 L9.2 11.8" stroke="#1b1b1b" stroke-width="2.6"/><path d="M2.8 17.6 L9.4 11.6" stroke="#ececec" stroke-width="1.3"/></svg>
<div style="position:absolute;left:462.5px;top:237.66px;font-size:13.75px;line-height:13.75px;color:#f4f4f4;font-weight:400;white-space:nowrap;-webkit-text-stroke:0.25px #f4f4f4;">View on explorer</div>
<svg style="position:absolute;left:436px;top:278px;" width="20" height="20" viewBox="0 0 20 20"><path d="M6.1 4.6 A7 7 0 1 0 13.8 4.6" fill="none" stroke="#ececec" stroke-width="1.25"/><rect x="9" y="2" width="2" height="8.8" fill="#b0b0b0"/></svg>
<div style="position:absolute;left:462.3px;top:281.66px;font-size:13.75px;line-height:13.75px;color:#f4f4f4;font-weight:400;white-space:nowrap;-webkit-text-stroke:0.25px #f4f4f4;">Disconnect</div>
<svg style="position:absolute;left:0px;top:0px;pointer-events:none" width="856" height="726" viewBox="0 0 856 726"><line x1="577.5" y1="363.5" x2="524.5" y2="226" stroke="#e21d22" stroke-width="3.6" stroke-linecap="round"/><path d="M519.8 213.8 L536.8 228.6 L516.8 236.2 Z" fill="#e21d22"/></svg>
</body></html>
